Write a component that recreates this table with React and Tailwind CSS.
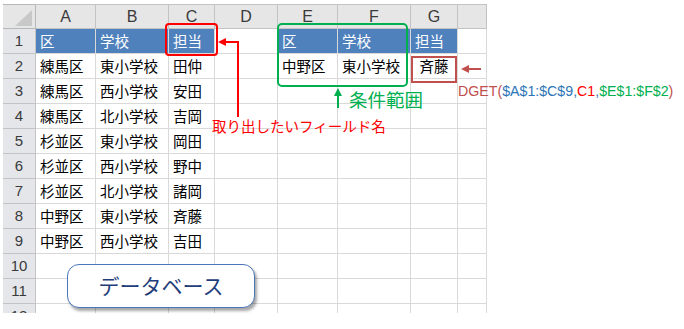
const cols = ['A', 'B', 'C', 'D', 'E', 'F', 'G', ''];
const widths = 'grid-cols-[33px_60px_73px_46px_63px_60px_73px_47px_29px]';

const rows = [
  ['区', '学校', '担当', '', '区', '学校', '担当'],
  ['練馬区', '東小学校', '田仲', '', '中野区', '東小学校', '斉藤'],
  ['練馬区', '西小学校', '安田'],
  ['練馬区', '北小学校', '吉岡'],
  ['杉並区', '東小学校', '岡田'],
  ['杉並区', '西小学校', '野中'],
  ['杉並区', '北小学校', '諸岡'],
  ['中野区', '東小学校', '斉藤'],
  ['中野区', '西小学校', '吉田'],
  [],
  [],
  [],
];

const jp = 'font-["Noto_Sans_CJK_JP",sans-serif]';

function Cell({ row, col, value }) {
  const blue = row === 0 && col !== 3 && col < 7;
  const centered = col === 6 && row === 1;
  return (
    <div
      className={`flex h-[25px] items-center border-b border-r border-[#d9d9d9] px-[4px] text-[14.5px] leading-none ${jp} ${
        blue ? 'bg-[#4f81bd] text-white' : 'bg-white text-black'
      } ${centered ? 'justify-center' : ''}`}
    >
      {value}
    </div>
  );
}

export default function App() {
  return (
    <div className="relative h-[329px] w-[684px] overflow-hidden bg-white">
      <div className="h-[313px] overflow-hidden pl-[3px] pt-[4px]">
        <div className={`grid ${widths} w-[484px]`}>
          <div className="h-[25px] border-b border-r border-t border-[#b8b8b8] bg-[#e6e6e6]">
            <svg width="32" height="24">
              <polygon points="29,5 29,21 12,21" fill="#c8c8c8" />
            </svg>
          </div>
          {cols.map((c, i) => (
            <div
              key={i}
              className="flex h-[25px] items-center justify-center border-b border-r border-t border-[#c3c3c3] bg-[#e6e6e6] font-['Liberation_Sans',sans-serif] text-[16px] text-[#3a3a3a]"
            >
              {c}
            </div>
          ))}
          {rows.map((r, ri) => (
            <div key={ri} className="contents">
              <div className="flex h-[25px] items-center justify-center border-b border-r border-[#c3c3c3] bg-[#e4e6ea] font-['Liberation_Sans',sans-serif] text-[15px] text-[#3a3a3a]">
                {ri + 1}
              </div>
              {cols.map((_, ci) => (
                <Cell key={ci} row={ri} col={ci} value={r[ci] || ''} />
              ))}
            </div>
          ))}
        </div>
      </div>

      {/* annotations over the sheet */}
      <div className="absolute left-[165px] top-[23px] h-[33px] w-[53px] rounded-[4px] border-2 border-[#ff0000]" />
      <div className="absolute left-[277px] top-[23px] h-[64px] w-[131px] rounded-[5px] border-2 border-[#00b050]" />
      <div className="absolute left-[411px] top-[56px] h-[27px] w-[46px] border-2 border-[#c0504d]" />

      <svg className="absolute left-0 top-0" width="684" height="329">
        <polyline points="224,42 238,42 238,117" fill="none" stroke="#ff0000" strokeWidth="2" />
        <polygon points="218,42 226,38 226,46" fill="#ff0000" />
        <line x1="338" y1="108" x2="338" y2="94" stroke="#00b050" strokeWidth="2" />
        <polygon points="338,88 334,96 342,96" fill="#00b050" />
        <line x1="468" y1="69" x2="481" y2="69" stroke="#c0504d" strokeWidth="2" />
        <polygon points="461,69 469,65 469,73" fill="#c0504d" />
      </svg>

      <div className={`absolute left-[212px] top-[119px] text-[14.5px] leading-none text-[#ff0000] ${jp}`}>
        取り出したいフィールド名
      </div>
      <div className={`absolute left-[349px] top-[90px] text-[18.5px] leading-none text-[#00b050] ${jp}`}>
        条件範囲
      </div>
      <div className="absolute left-[458px] top-[84px] whitespace-nowrap font-['Liberation_Sans',sans-serif] text-[14.2px] leading-none">
        <span className="text-[#c0504d]">DGET(</span>
        <span className="text-[#2e75b6]">$A$1:$C$9,</span>
        <span className="text-[#ff0000]">C1</span>
        <span className="text-[#2e75b6]">,</span>
        <span className="text-[#00b050]">$E$1:$F$2</span>
        <span className="text-[#c0504d]">)</span>
      </div>

      <div
        className={`absolute left-[67px] top-[264px] flex h-[44px] w-[188px] items-center justify-center rounded-[12px] border-[1.5px] border-[#4a76b8] bg-white text-[21px] text-[#1f3d7a] shadow-[2px_3px_3px_rgba(0,0,0,0.35)] ${jp}`}
      >
        データベース
      </div>
    </div>
  );
}
